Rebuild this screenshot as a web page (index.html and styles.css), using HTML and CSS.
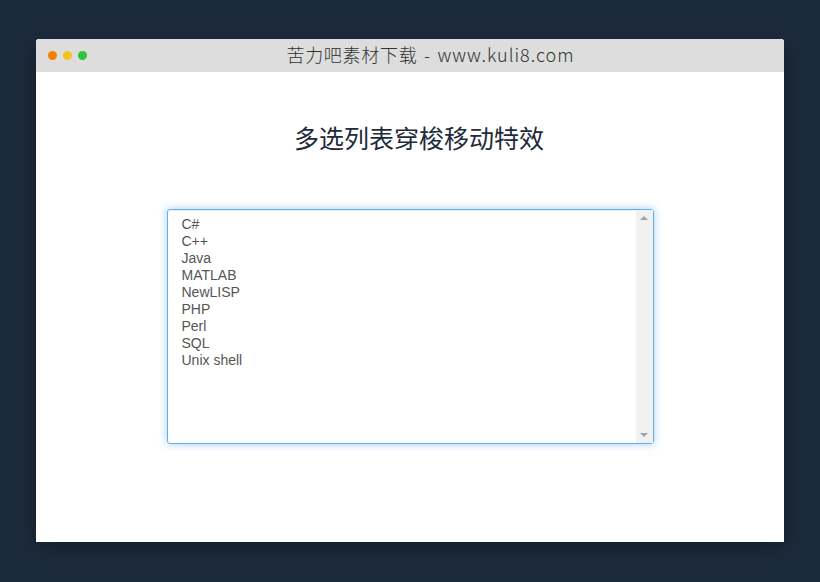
FILE: index.html
```html
<!DOCTYPE html>
<html lang="zh-CN">
<head>
<meta charset="utf-8">
<title>多选列表穿梭移动特效</title>
<link rel="stylesheet" href="styles.css">
</head>
<body>
<div class="window">
  <div class="titlebar">
    <div class="dots">
      <span class="dot dot-red"></span>
      <span class="dot dot-yellow"></span>
      <span class="dot dot-green"></span>
    </div>
    <div class="site">苦力吧素材下载 <span class="sep">-</span> <span class="url">www.kuli8.com</span></div>
  </div>
  <div class="content">
    <h1 class="heading">多选列表穿梭移动特效</h1>
    <div class="listbox" role="listbox" aria-multiselectable="true">
      <ul class="options">
        <li>C#</li>
        <li>C++</li>
        <li>Java</li>
        <li>MATLAB</li>
        <li>NewLISP</li>
        <li>PHP</li>
        <li>Perl</li>
        <li>SQL</li>
        <li>Unix shell</li>
      </ul>
      <div class="scrollbar">
        <span class="arrow arrow-up"></span>
        <span class="arrow arrow-down"></span>
      </div>
    </div>
  </div>
</div>
</body>
</html>
```
FILE: styles.css
```css
html, body {
  margin: 0;
  padding: 0;
}
body {
  background: #1c2b3c;
  width: 820px;
  height: 582px;
  padding: 39px 36px 0;
  box-sizing: border-box;
  font-family: "Liberation Sans", Arial, sans-serif;
}
.window {
  width: 748px;
  height: 503px;
  background: #fff;
  border-radius: 3px 3px 0 0;
  box-shadow: 0 4px 22px rgba(0, 0, 0, 0.35);
  display: flex;
  flex-direction: column;
  overflow: hidden;
}
.titlebar {
  height: 33px;
  background: #dddddd;
  display: flex;
  align-items: center;
  position: relative;
}
.dots {
  display: flex;
  gap: 6px;
  padding-left: 12px;
}
.dot {
  width: 9px;
  height: 9px;
  border-radius: 50%;
  display: block;
}
.dot-red { background: #f77f00; }
.dot-yellow { background: #f2c31a; }
.dot-green { background: #2fc43a; }
.site {
  flex: 1;
  text-align: center;
  padding-right: 10px;
  padding-bottom: 4px;
  line-height: 24px;
  font-family: "Noto Sans CJK SC", "Noto Sans", sans-serif;
  font-weight: 300;
  font-size: 18px;
  color: #333;
  letter-spacing: 0.7px;
  word-spacing: 2px;
}
.url {
  letter-spacing: 1px;
}
.content {
  flex: 1;
  padding-top: 47px;
  display: flex;
  flex-direction: column;
  align-items: center;
}
.heading {
  margin: 0 0 54px;
  padding-left: 18px;
  font-family: "Noto Sans CJK SC", sans-serif;
  font-weight: 400;
  font-size: 25px;
  line-height: 36px;
  color: #1d2b3a;
}
.listbox {
  width: 487px;
  height: 235px;
  box-sizing: border-box;
  border: 1px solid #66afe9;
  border-radius: 3px;
  box-shadow: inset 0 1px 1px rgba(0, 0, 0, 0.075), 0 0 8px rgba(102, 175, 233, 0.6);
  display: flex;
  background: #fff;
}
.options {
  flex: 1;
  list-style: none;
  margin: 0;
  padding: 6px 12px;
}
.options li {
  padding: 0 2px;
  font-size: 14px;
  line-height: 17px;
  color: #555;
}
.scrollbar {
  width: 17px;
  background: #f1f1f1;
  display: flex;
  flex-direction: column;
  justify-content: space-between;
  align-items: center;
  padding: 6px 0;
}
.arrow {
  width: 0;
  height: 0;
  border-left: 4px solid transparent;
  border-right: 4px solid transparent;
}
.arrow-up { border-bottom: 4px solid #a3a3a3; }
.arrow-down { border-top: 4px solid #a3a3a3; }
```
